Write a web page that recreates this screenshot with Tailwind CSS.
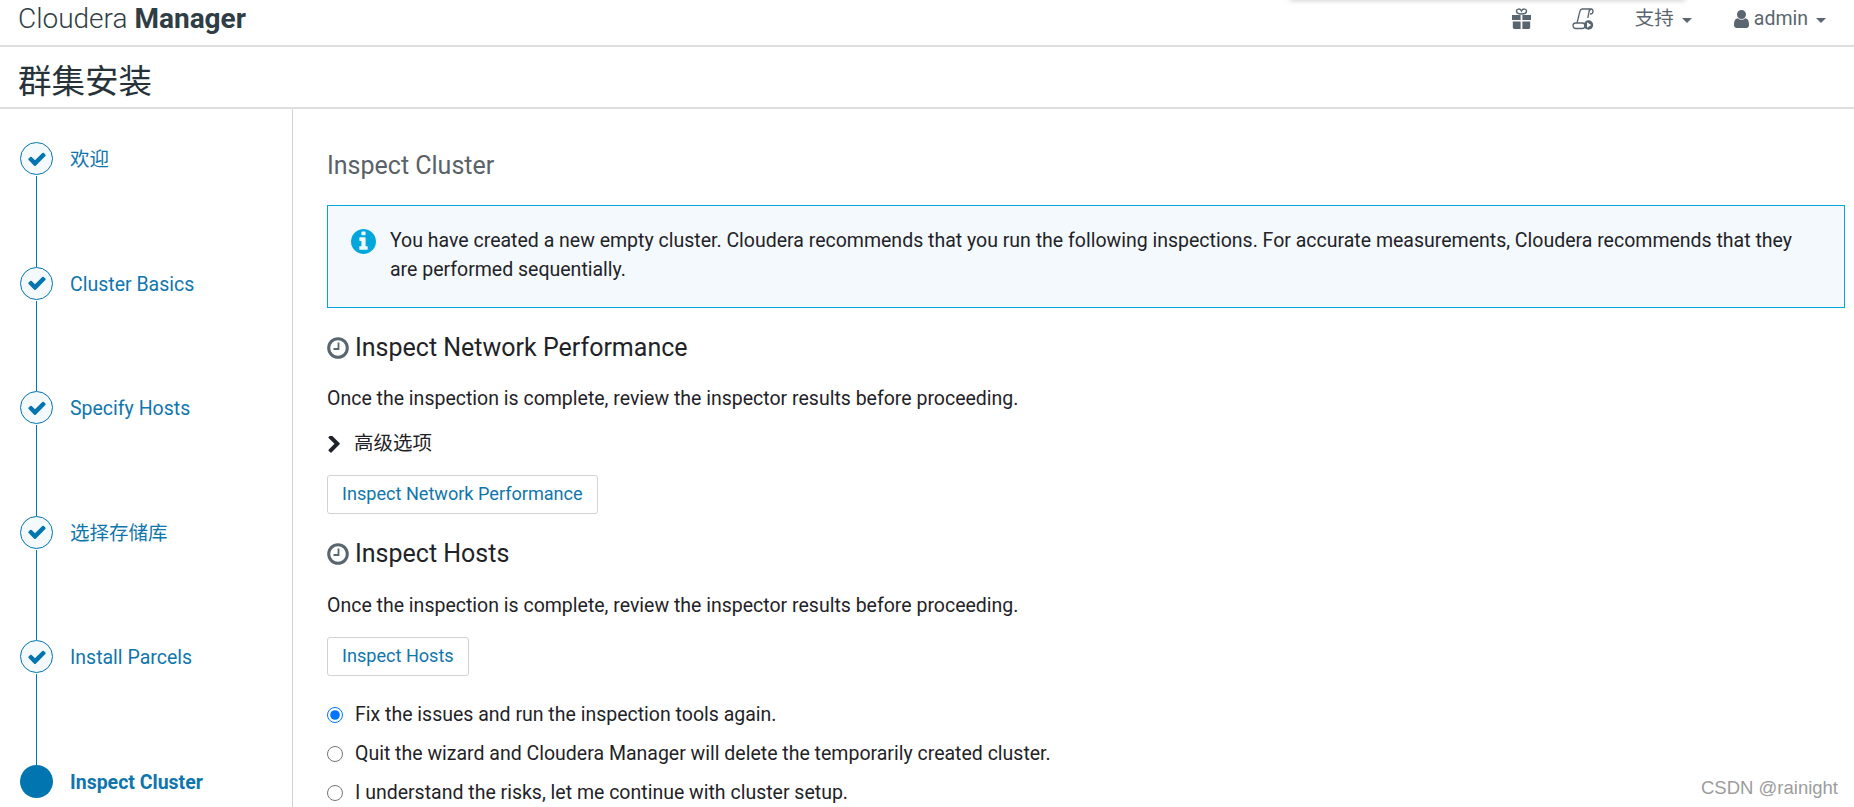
<!doctype html>
<html lang="en">
  <head>
    <meta charset="UTF-8" />
    <title>Cloudera Manager</title>
    <script src="https://cdn.jsdelivr.net/npm/@tailwindcss/browser@4"></script>
  </head>
  <body class="relative h-[807px] overflow-hidden bg-white text-[16px] text-[#1f2328] font-['Roboto','Noto_Sans_CJK_SC',sans-serif]">
    <!-- dropdown shadow leaking in from above -->
    <div class="absolute left-[1290px] top-[-6px] h-[6px] w-[395px] shadow-[0_1px_5px_rgba(0,0,0,0.18)]"></div>

    <header class="flex h-[47px] items-start justify-between border-b-2 border-[#dedede] pl-[18px] pr-[28px]">
      <div class="text-[28px] leading-[38px] text-[#2f3d45]">
        <span class="font-light">Cloudera</span>
        <span class="font-bold">Manager</span>
      </div>
      <nav class="flex h-[38px] items-center text-[#5b6670]">
        <!-- gift -->
        <svg class="h-[22px] w-[21px]" viewBox="0 0 21 22" fill="#59656f">
          <path d="M1 7h8.6v5H1zM11.4 7H20v5h-8.6zM1.8 13.5h7.8V21H3.2a1.4 1.4 0 0 1-1.4-1.4zM11.4 13.5h7.8v6.1a1.4 1.4 0 0 1-1.4 1.4h-6.4z" />
          <path d="M10.5 6C8 6 5.5 5 5.5 3s3.5-3 5-0c1.500-3 5-2 5 0s-2.500 3-5 3z" fill="none" stroke="#59656f" stroke-width="1.500" />
        </svg>
        <!-- scroll with play badge -->
        <svg class="ml-[40px] h-[22px] w-[22px]" viewBox="0 0 22 22" fill="none" stroke="#59656f" stroke-width="1.300">
          <path d="M5 15 8 3a2.400 2.400 0 0 1 2.300-2H19a2.400 2.400 0 0 1 2 2.500C21 5.500 19.500 6 18 6" />
          <path d="M19 1.500c-1.500 0-2 1.500-2 2.500l-1.200 6" />
          <rect x="1" y="15" width="12" height="5.500" rx="2.700" />
          <circle cx="16.500" cy="17" r="4.700" fill="#59656f" stroke="none" />
          <path d="M15 14.200v5.600l4.200-2.800z" fill="#fff" stroke="none" />
        </svg>
        <span class="ml-[41px] text-[19.500px]">支持</span>
        <span class="ml-[8px] mt-[2px] h-0 w-0 border-x-[5px] border-t-[5px] border-x-transparent border-t-[#5b6670]"></span>
        <svg class="ml-[42px] h-[18px] w-[15px]" viewBox="256 128 1280 1536" fill="#59656f" preserveAspectRatio="none">
          <path d="M1536 1399q0 109-62.500 187t-150.500 78h-854q-88 0-150.500-78t-62.500-187q0-85 8.500-160.500t31.500-152 58.500-131 94-89 134.500-34.500q131 128 313 128t313-128q76 0 134.500 34.500t94 89 58.500 131 31.500 152 8.500 160.500zm-256-887q0 159-112.500 271.500t-271.500 112.500-271.500-112.500-112.500-271.500 112.500-271.500 271.500-112.500 271.500 112.500 112.500 271.500z" />
        </svg>
        <span class="ml-[5px] text-[19.500px]">admin</span>
        <span class="ml-[8px] mt-[2px] h-0 w-0 border-x-[5.500px] border-t-[5px] border-x-transparent border-t-[#5b6670]"></span>
      </nav>
    </header>

    <div class="flex h-[62px] items-center border-b-2 border-[#dedede] pl-[18px] pt-[10px]">
      <h1 class="text-[33.500px] leading-none text-[#263238]">群集安装</h1>
    </div>

    <div class="flex h-[700px]">
      <aside class="w-[293px] shrink-0 border-r border-[#d4d4d4] pl-[20px] pt-[33px] text-[19.500px] text-[#0f76ad]">
        <div class="flex h-[124.500px] gap-[17px]">
          <div class="flex w-[33px] flex-col items-center">
            <span class="flex h-[33px] w-[33px] items-center justify-center rounded-full border border-[#0075b0] bg-[#f3f9fd]">
              <svg class="h-[20px] w-[20px]" viewBox="0 0 1792 1792" fill="#0075b0"><path d="M1671 566q0 40-28 68l-724 724-136 136q-28 28-68 28t-68-28l-136-136-362-362q-28-28-28-68t28-68l136-136q28-28 68-28t68 28l294 295 656-657q28-28 68-28t68 28l136 136q28 28 28 68z" /></svg>
            </span>
            <span class="mt-[1px] w-px flex-1 bg-[#0075b0]"></span>
          </div>
          <span class="leading-[35px]">欢迎</span>
        </div>
        <div class="flex h-[124.500px] gap-[17px]">
          <div class="flex w-[33px] flex-col items-center">
            <span class="flex h-[33px] w-[33px] items-center justify-center rounded-full border border-[#0075b0] bg-[#f3f9fd]">
              <svg class="h-[20px] w-[20px]" viewBox="0 0 1792 1792" fill="#0075b0"><path d="M1671 566q0 40-28 68l-724 724-136 136q-28 28-68 28t-68-28l-136-136-362-362q-28-28-28-68t28-68l136-136q28-28 68-28t68 28l294 295 656-657q28-28 68-28t68 28l136 136q28 28 28 68z" /></svg>
            </span>
            <span class="mt-[1px] w-px flex-1 bg-[#0075b0]"></span>
          </div>
          <span class="leading-[35px]">Cluster Basics</span>
        </div>
        <div class="flex h-[124.500px] gap-[17px]">
          <div class="flex w-[33px] flex-col items-center">
            <span class="flex h-[33px] w-[33px] items-center justify-center rounded-full border border-[#0075b0] bg-[#f3f9fd]">
              <svg class="h-[20px] w-[20px]" viewBox="0 0 1792 1792" fill="#0075b0"><path d="M1671 566q0 40-28 68l-724 724-136 136q-28 28-68 28t-68-28l-136-136-362-362q-28-28-28-68t28-68l136-136q28-28 68-28t68 28l294 295 656-657q28-28 68-28t68 28l136 136q28 28 28 68z" /></svg>
            </span>
            <span class="mt-[1px] w-px flex-1 bg-[#0075b0]"></span>
          </div>
          <span class="leading-[35px]">Specify Hosts</span>
        </div>
        <div class="flex h-[124.500px] gap-[17px]">
          <div class="flex w-[33px] flex-col items-center">
            <span class="flex h-[33px] w-[33px] items-center justify-center rounded-full border border-[#0075b0] bg-[#f3f9fd]">
              <svg class="h-[20px] w-[20px]" viewBox="0 0 1792 1792" fill="#0075b0"><path d="M1671 566q0 40-28 68l-724 724-136 136q-28 28-68 28t-68-28l-136-136-362-362q-28-28-28-68t28-68l136-136q28-28 68-28t68 28l294 295 656-657q28-28 68-28t68 28l136 136q28 28 28 68z" /></svg>
            </span>
            <span class="mt-[1px] w-px flex-1 bg-[#0075b0]"></span>
          </div>
          <span class="leading-[35px]">选择存储库</span>
        </div>
        <div class="flex h-[124.500px] gap-[17px]">
          <div class="flex w-[33px] flex-col items-center">
            <span class="flex h-[33px] w-[33px] items-center justify-center rounded-full border border-[#0075b0] bg-[#f3f9fd]">
              <svg class="h-[20px] w-[20px]" viewBox="0 0 1792 1792" fill="#0075b0"><path d="M1671 566q0 40-28 68l-724 724-136 136q-28 28-68 28t-68-28l-136-136-362-362q-28-28-28-68t28-68l136-136q28-28 68-28t68 28l294 295 656-657q28-28 68-28t68 28l136 136q28 28 28 68z" /></svg>
            </span>
            <span class="mt-[1px] w-px flex-1 bg-[#0075b0]"></span>
          </div>
          <span class="leading-[35px]">Install Parcels</span>
        </div>
        <div class="flex gap-[17px]">
          <span class="h-[33px] w-[33px] rounded-full bg-[#0075b0]"></span>
          <span class="font-bold leading-[35px]">Inspect Cluster</span>
        </div>
      </aside>

      <main class="min-w-0 flex-1 pl-[34px] pr-[9px]">
        <h2 class="mt-[41px] text-[25px] leading-[32px] text-[#5a6268]">Inspect Cluster</h2>

        <div class="mt-[23px] flex h-[103px] border border-[#00a6dc] bg-[#f4f9fd] pl-[23px] pr-[40px] pt-[20px] text-[19.500px] leading-[29px]">
          <svg class="mt-[3px] h-[25px] w-[25px] shrink-0" viewBox="128 128 1536 1536" fill="#00a6dc"><path d="M1152 1376v-160q0-14-9-23t-23-9h-96v-512q0-14-9-23t-23-9h-320q-14 0-23 9t-9 23v160q0 14 9 23t23 9h96v320h-96q-14 0-23 9t-9 23v160q0 14 9 23t23 9h448q14 0 23-9t9-23zm-128-896v-160q0-14-9-23t-23-9h-192q-14 0-23 9t-9 23v160q0 14 9 23t23 9h192q14 0 23-9t9-23zm640 416q0 209-103 385.500t-279.500 279.500-385.500 103-385.500-103-279.500-279.500-103-385.500 103-385.500 279.500-279.500 385.500-103 385.500 103 279.500 279.500 103 385.500z" /></svg>
          <p class="ml-[14px]">You have created a new empty cluster. Cloudera recommends that you run the following inspections. For accurate measurements, Cloudera recommends that they are performed sequentially.</p>
        </div>

        <h3 class="mt-[23px] flex h-[34px] items-center text-[25px]">
          <svg class="mr-[6px] h-[22px] w-[22px]" viewBox="0 0 22 22" fill="none" stroke="#59656f"><circle cx="11" cy="11" r="9.300" stroke-width="3" /><path d="M11.500 5.500V12H6.500" stroke-width="1.800" /></svg>
          Inspect Network Performance
        </h3>
        <p class="mt-[20px] text-[19.500px] leading-[28px]">Once the inspection is complete, review the inspector results before proceeding.</p>
        <div class="mt-[17px] flex items-center text-[19.500px] leading-[28px]">
          <svg class="ml-[-1px] h-[17px] w-[17px]" viewBox="256 128 1280 1536" fill="#1f2328"><path d="M1363 877l-742 742q-19 19-45 19t-45-19l-166-166q-19-19-19-45t19-45l531-531-531-531q-19-19-19-45t19-45l166-166q19-19 45-19t45 19l742 742q19 19 19 45t-19 45z" /></svg>
          <span class="ml-[11px]">高级选项</span>
        </div>
        <button class="mt-[17px] block h-[39px] rounded-[3px] border border-[#d0d3d6] px-[14px] pb-[2px] text-[18.100px] text-[#0f76ad]">Inspect Network Performance</button>

        <h3 class="mt-[23px] flex h-[34px] items-center text-[25px]">
          <svg class="mr-[6px] h-[22px] w-[22px]" viewBox="0 0 22 22" fill="none" stroke="#59656f"><circle cx="11" cy="11" r="9.300" stroke-width="3" /><path d="M11.500 5.500V12H6.500" stroke-width="1.800" /></svg>
          Inspect Hosts
        </h3>
        <p class="mt-[21px] text-[19.500px] leading-[28px]">Once the inspection is complete, review the inspector results before proceeding.</p>
        <button class="mt-[17px] block h-[39px] rounded-[3px] border border-[#d0d3d6] px-[14px] pb-[2px] text-[18.100px] text-[#0f76ad]">Inspect Hosts</button>

        <div class="mt-[25px] flex flex-col gap-[11px] text-[19.500px] leading-[28px]">
          <label class="flex items-center gap-[12px]"><input type="radio" name="next" checked class="m-0 h-[16px] w-[16px]" />Fix the issues and run the inspection tools again.</label>
          <label class="flex items-center gap-[12px]"><input type="radio" name="next" class="m-0 h-[16px] w-[16px]" />Quit the wizard and Cloudera Manager will delete the temporarily created cluster.</label>
          <label class="flex items-center gap-[12px]"><input type="radio" name="next" class="m-0 h-[16px] w-[16px]" />I understand the risks, let me continue with cluster setup.</label>
        </div>
      </main>
    </div>

    <div class="absolute right-[16px] top-[777px] font-['Liberation_Sans',sans-serif] text-[18.500px] leading-[22px] text-[#9c9c9c]">CSDN @rainight</div>
  </body>
</html>
